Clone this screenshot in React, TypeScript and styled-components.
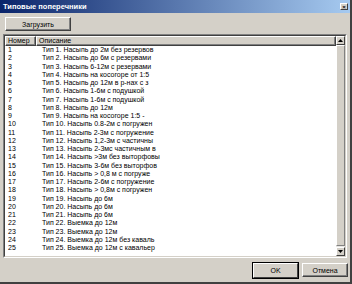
import React from 'react';
import styled, { createGlobalStyle } from 'styled-components';

const GlobalStyle = createGlobalStyle`
  html, body {
    margin: 0;
    padding: 0;
    background: #d4d0c8;
  }
  body {
    font-family: "Liberation Sans", Arial, sans-serif;
    font-size: 7px;
    color: #000;
  }
`;

const rows: string[] = [
  'Тип 1. Насыпь до 2м без резервов',
  'Тип 2. Насыпь до 6м с резервами',
  'Тип 3. Насыпь 6-12м с резервами',
  'Тип 4. Насыпь на косогоре от 1:5',
  'Тип 5. Насыпь до 12м в р-нах с з',
  'Тип 6. Насыпь 1-6м с подушкой',
  'Тип 7. Насыпь 1-6м с подушкой',
  'Тип 8. Насыпь до 12м',
  'Тип 9. Насыпь на косогоре 1:5 -',
  'Тип 10. Насыпь 0.8-2м с погружен',
  'Тип 11. Насыпь 2-3м с погружение',
  'Тип 12. Насыпь 1,2-3м с частичны',
  'Тип 13. Насыпь 2-3мс частичным в',
  'Тип 14. Насыпь >3м без выторфовы',
  'Тип 15. Насыпь 3-6м без выторфов',
  'Тип 16. Насыпь > 0,8 м с погруже',
  'Тип 17. Насыпь 2-6м с погружение',
  'Тип 18. Насыпь > 0,8м с погружен',
  'Тип 19. Насыпь до 6м',
  'Тип 20. Насыпь до 6м',
  'Тип 21. Насыпь до 6м',
  'Тип 22. Выемка до 12м',
  'Тип 23. Выемка до 12м',
  'Тип 24. Выемка до 12м без каваль',
  'Тип 25. Выемка до 12м с кавальер',
];

const Window = styled.div`
  width: 352px;
  height: 284px;
  box-sizing: border-box;
  background: #d4d0c8;
  border-right: 2px solid #404040;
  border-bottom: 2px solid #404040;
  display: flex;
  flex-direction: column;
  overflow: hidden;
`;

const TitleBar = styled.div`
  height: 13px;
  flex: none;
  display: flex;
  align-items: center;
  justify-content: space-between;
  padding: 0 2px 0 3px;
  background: linear-gradient(to right, #0a246a, #a6caf0);
  color: #fff;
  font-weight: bold;
  font-size: 7.5px;
`;

const CloseButton = styled.div`
  width: 8px;
  height: 7px;
  box-sizing: border-box;
  background: #d4d0c8;
  border: 1px solid;
  border-color: #fff #404040 #404040 #fff;
  display: flex;
  align-items: center;
  justify-content: center;
  color: #000;
  font-size: 6px;
  line-height: 1;
`;

const Toolbar = styled.div`
  flex: none;
  padding: 4px 5px 3px;
  display: flex;
`;

const Button = styled.div<{ $width: number; $default?: boolean }>`
  width: ${p => p.$width}px;
  height: ${p => (p.$default ? 15 : 14)}px;
  box-sizing: border-box;
  background: #d4d0c8;
  border: 1px solid;
  border-color: #fff #404040 #404040 #fff;
  box-shadow: ${p => (p.$default ? '0 0 0 1px #000' : 'inset -1px -1px 0 #808080')};
  display: flex;
  align-items: center;
  justify-content: center;
  font-size: 7px;
`;

const ListView = styled.div`
  flex: 1;
  margin: 0 3px 0 3px;
  border: 1px solid;
  border-color: #808080 #fff #fff #808080;
  display: flex;
  min-height: 0;
`;

const ListInner = styled.div`
  flex: 1;
  display: flex;
  border: 1px solid;
  border-color: #404040 #d4d0c8 #d4d0c8 #404040;
  background: #fff;
  min-height: 0;
`;

const Table = styled.div`
  flex: 1;
  display: flex;
  flex-direction: column;
  overflow: hidden;
`;

const Header = styled.div`
  display: flex;
  height: 10px;
  flex: none;
`;

const HeaderCell = styled.div<{ $width?: number }>`
  ${p => (p.$width ? `width: ${p.$width}px;` : 'flex: 1;')}
  box-sizing: border-box;
  background: #d4d0c8;
  border: 1px solid;
  border-color: #fff #404040 #404040 #fff;
  box-shadow: inset -1px -1px 0 #808080;
  padding-left: 2px;
  line-height: 8px;
  font-size: 7px;
`;

const Row = styled.div`
  display: flex;
  height: 8.25px;
  line-height: 8.25px;
  flex: none;
`;

const Cell = styled.div<{ $width?: number }>`
  ${p => (p.$width ? `width: ${p.$width}px;` : 'flex: 1;')}
  padding-left: 3px;
  white-space: nowrap;
  overflow: hidden;
`;

const ScrollBar = styled.div`
  width: 9px;
  flex: none;
  display: flex;
  flex-direction: column;
  background: #e8e6e2;
`;

const ScrollArrow = styled.div`
  height: 9px;
  flex: none;
  box-sizing: border-box;
  background: #d4d0c8;
  border: 1px solid;
  border-color: #fff #404040 #404040 #fff;
  display: flex;
  align-items: center;
  justify-content: center;
`;

const ScrollThumb = styled.div`
  flex: 1;
  margin-bottom: 1px;
  box-sizing: border-box;
  background: #d4d0c8;
  border: 1px solid;
  border-color: #fff #808080 #808080 #fff;
`;

const Footer = styled.div`
  flex: none;
  height: 24px;
  display: flex;
  justify-content: flex-end;
  align-items: center;
  gap: 4px;
  padding-right: 2px;
`;

const Arrow: React.FC<{ up?: boolean }> = ({ up }) => (
  <svg width="5" height="3" viewBox="0 0 5 3">
    <polygon points={up ? '2.5,0 5,3 0,3' : '0,0 5,0 2.5,3'} fill="#000" />
  </svg>
);

const App: React.FC = () => {
  return (
    <>
      <GlobalStyle />
      <Window>
        <TitleBar>
          <span>Типовые поперечники</span>
          <CloseButton>×</CloseButton>
        </TitleBar>
        <Toolbar>
          <Button $width={66}>Загрузить</Button>
        </Toolbar>
        <ListView>
          <ListInner>
            <Table>
              <Header>
                <HeaderCell $width={31}>Номер</HeaderCell>
                <HeaderCell>Описание</HeaderCell>
              </Header>
              {rows.map((text, i) => (
                <Row key={i}>
                  <Cell $width={31}>{i + 1}</Cell>
                  <Cell>{text}</Cell>
                </Row>
              ))}
            </Table>
            <ScrollBar>
              <ScrollArrow><Arrow up /></ScrollArrow>
              <ScrollThumb />
              <ScrollArrow><Arrow /></ScrollArrow>
            </ScrollBar>
          </ListInner>
        </ListView>
        <Footer>
          <Button $width={45} $default>OK</Button>
          <Button $width={46}>Отмена</Button>
        </Footer>
      </Window>
    </>
  );
};

export default App;
